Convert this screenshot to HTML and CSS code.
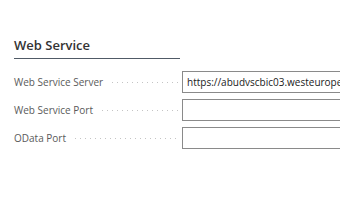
FILE: index.html
```html
<!DOCTYPE html>
<html>
<head>
<meta charset="utf-8">
<link rel="stylesheet" href="styles.css">
</head>
<body>
<div class="page">
  <div class="group">
    <h2 class="group-title">Web Service</h2>
  </div>
  <div class="fields">
    <div class="row">
      <label class="label">Web Service Server</label>
      <div class="input">https://abudvscbic03.westeurope.cloudapp.azure.com</div>
    </div>
    <div class="row">
      <label class="label">Web Service Port</label>
      <div class="input"></div>
    </div>
    <div class="row">
      <label class="label">OData Port</label>
      <div class="input"></div>
    </div>
  </div>
</div>
</body>
</html>
```

FILE: styles.css
```css
html, body {
  margin: 0;
  padding: 0;
  background: #ffffff;
}
.page {
  width: 340px;
  height: 200px;
  overflow: hidden;
  font-family: "Open Sans", "Noto Sans", sans-serif;
  padding-top: 36px;
  box-sizing: border-box;
}
.group {
  margin-left: 14px;
  width: 166px;
  border-bottom: 1px solid #505a66;
  height: 22px;
}
.group-title {
  margin: 0;
  font-size: 13px;
  font-weight: 600;
  color: #333333;
  line-height: 18px;
}
.fields {
  margin-top: 12px;
  display: flex;
  flex-direction: column;
  gap: 6px;
}
.row {
  display: flex;
  align-items: center;
  height: 22px;
}
.label {
  width: 168px;
  margin-left: 14px;
  font-size: 10px;
  color: #5a5a5a;
  display: flex;
  align-items: center;
  white-space: nowrap;
}
.label::after {
  content: "";
  flex: 1;
  margin-left: 7px;
  margin-right: 3px;
  height: 1px;
  background-image: radial-gradient(circle, #c4c4c4 0.6px, transparent 0.8px);
  background-size: 5px 1px;
  background-repeat: repeat-x;
}
.input {
  flex: 1;
  height: 22px;
  box-sizing: border-box;
  border: 1px solid #8a8a8a;
  border-right: none;
  font-size: 10px;
  color: #212121;
  line-height: 20px;
  padding-left: 4px;
  white-space: nowrap;
  overflow: hidden;
}
```
